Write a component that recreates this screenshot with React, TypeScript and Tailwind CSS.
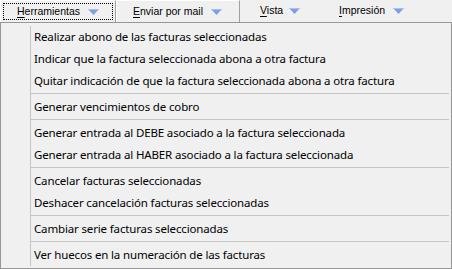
import React from 'react'

type Row = { label: string } | 'sep'

const rows: Row[] = [
  { label: 'Realizar abono de las facturas seleccionadas' },
  { label: 'Indicar que la factura seleccionada abona a otra factura' },
  { label: 'Quitar indicación de que la factura seleccionada abona a otra factura' },
  'sep',
  { label: 'Generar vencimientos de cobro' },
  'sep',
  { label: 'Generar entrada al DEBE asociado a la factura seleccionada' },
  { label: 'Generar entrada al HABER asociado a la factura seleccionada' },
  'sep',
  { label: 'Cancelar facturas seleccionadas' },
  { label: 'Deshacer cancelación facturas seleccionadas' },
  'sep',
  { label: 'Cambiar serie facturas seleccionadas' },
  'sep',
  { label: 'Ver huecos en la numeración de las facturas' },
]

function Arrow() {
  return (
    <svg width="11" height="6" viewBox="0 0 11 6" className="shrink-0">
      <polygon points="0,0 11,0 5.5,6" fill="#7f9fe4" />
      <rect x="0" y="0" width="11" height="1" fill="#a9c0f2" />
    </svg>
  )
}

function ToolButton({ first, rest, className }: { first: string; rest: string; className: string }) {
  return (
    <div className={className}>
      <span className="text-black">
        <span className="underline underline-offset-2">{first}</span>
        {rest}
      </span>
      <Arrow />
    </div>
  )
}

export default function App() {
  return (
    <div className="w-[452px] h-[269px] bg-[#f0f0f0] flex flex-col overflow-hidden">
      {/* toolbar */}
      <div className="h-[22px] flex text-[10.5px] font-['Liberation_Sans',Arial,sans-serif]">
        <div className="w-[116px] h-full border-t border-l border-white border-r border-r-[#a0a0a0] p-[2px]">
          <div className="h-full border border-dotted border-black flex items-center gap-[8px] pl-[13px]">
            <span className="text-black">
              <span className="underline underline-offset-2">H</span>erramientas
            </span>
            <Arrow />
          </div>
        </div>
        <ToolButton
          first="E"
          rest="nviar por mail"
          className="w-[124px] h-full border-t border-l border-white border-r border-r-[#a0a0a0] flex items-center gap-[8px] pl-[16px]"
        />
        <ToolButton first="V" rest="ista" className="w-[80px] h-full flex items-center gap-[6px] pl-[20px]" />
        <ToolButton first="I" rest="mpresión" className="w-[100px] h-full flex items-center gap-[8px] pl-[19px]" />
      </div>

      {/* dropdown menu */}
      <div className="flex-1 border border-[#979797] pt-[3px] pr-[1px] text-[11.5px] tracking-[-0.15px] text-black font-['Noto_Sans',sans-serif]">
        {rows.map((row, i) =>
          row === 'sep' ? (
            <div key={i} className="h-[4px] flex">
              <div className="w-[30px] border-r border-[#c5c5c5]" />
              <div className="flex-1 pt-[1px] pr-[1px]">
                <div className="h-[1px] bg-[#c5c5c5]" />
              </div>
            </div>
          ) : (
            <div key={i} className="h-[22px] flex">
              <div className="w-[30px] border-r border-[#c5c5c5]" />
              <div className="flex-1 flex items-center pl-[3px] whitespace-nowrap">{row.label}</div>
            </div>
          )
        )}
      </div>
    </div>
  )
}
